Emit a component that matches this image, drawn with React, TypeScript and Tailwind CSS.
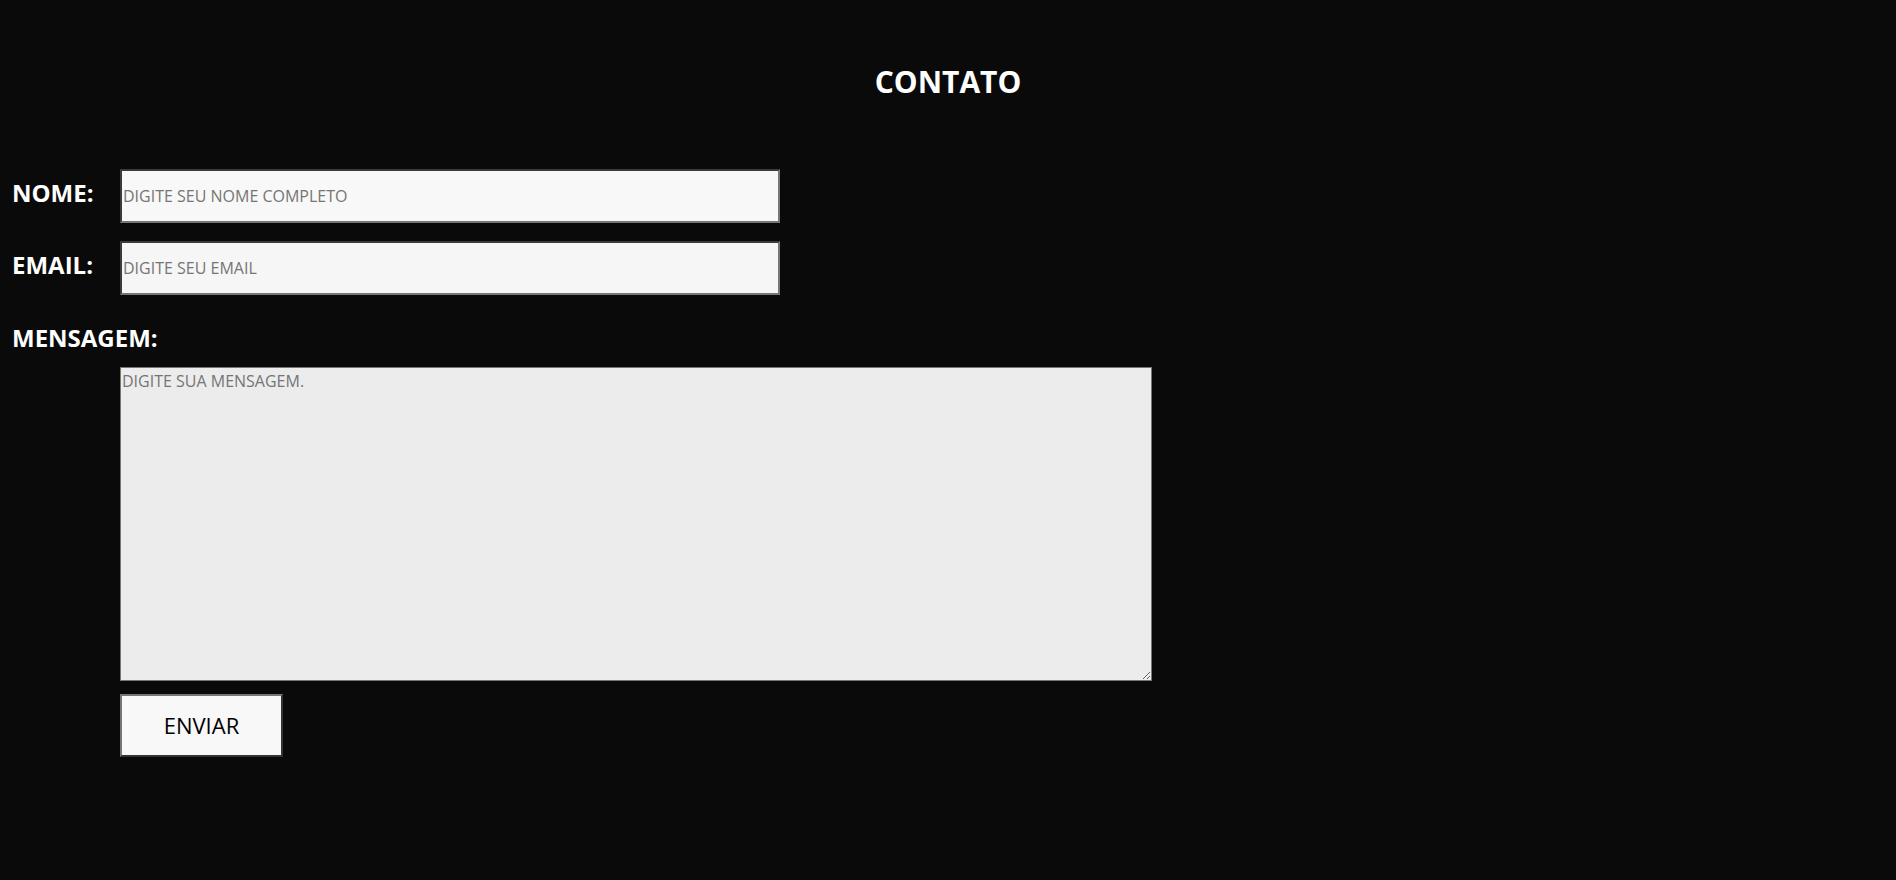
import React from "react";

export default function App() {
  return (
    <div className="min-h-[880px] w-full bg-[#0a0a0a] font-['Open_Sans','Noto_Sans',sans-serif]">
      <h1 className="pt-[62px] text-center text-[30px] font-bold leading-[40px] text-white">
        CONTATO
      </h1>
      <form className="mt-[67px] pl-[12px]" onSubmit={(e) => e.preventDefault()}>
        <div className="flex items-baseline">
          <label className="w-[108px] text-[24px] font-bold text-white">NOME:</label>
          <input
            type="text"
            placeholder="DIGITE SEU NOME COMPLETO"
            className="h-[54px] w-[660px] border-2 border-t-[#3b3b3b] border-l-[#3b3b3b] border-r-[#767676] border-b-[#767676] bg-[#f8f8f8] pl-[1px] text-[16px] text-black outline-none placeholder:text-[#757575]"
          />
        </div>
        <div className="mt-[18px] flex items-baseline">
          <label className="w-[108px] text-[24px] font-bold text-white">EMAIL:</label>
          <input
            type="email"
            placeholder="DIGITE SEU EMAIL"
            className="h-[54px] w-[660px] border-2 border-t-[#3b3b3b] border-l-[#3b3b3b] border-r-[#767676] border-b-[#767676] bg-[#f6f6f6] pl-[1px] text-[16px] text-black outline-none placeholder:text-[#757575]"
          />
        </div>
        <div className="mt-[25px] text-[24px] font-bold leading-[36px] text-white">MENSAGEM:</div>
        <div className="mt-[11px] pl-[108px]">
          <textarea
            placeholder="DIGITE SUA MENSAGEM."
            className="block h-[314px] w-[1032px] border border-[#767676] bg-[#ececec] pl-[1px] pt-[1px] text-[16px] text-black outline-none placeholder:text-[#757575]"
          />
          <button
            type="submit"
            className="mt-[13px] h-[63px] w-[163px] border-2 border-t-[#767676] border-l-[#767676] border-r-[#333333] border-b-[#333333] bg-[#f8f8f8] text-[22px] text-black"
          >
            ENVIAR
          </button>
        </div>
      </form>
    </div>
  );
}
